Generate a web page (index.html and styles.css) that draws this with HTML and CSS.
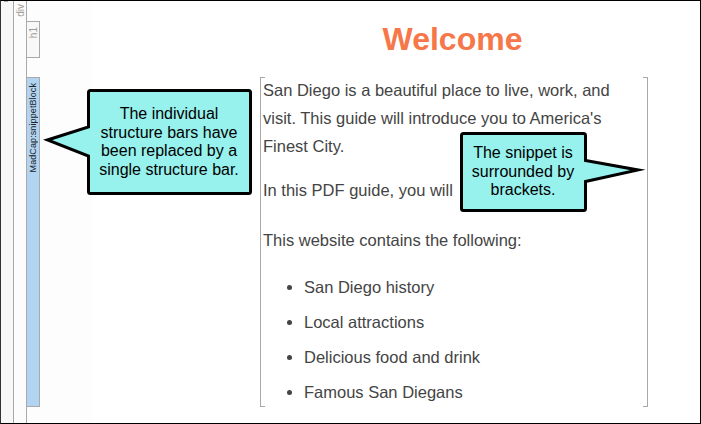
FILE: index.html
```html
<!DOCTYPE html>
<html lang="en">
<head>
    <meta charset="UTF-8">
    <title>Welcome</title>
    <link rel="stylesheet" href="styles.css">
</head>
<body>
    <div class="window">
        <!-- Structure bars -->
        <div class="bar-col bar-col-outer"></div>
        <div class="bar-col bar-col-div">
            <span class="bar-label">div</span>
        </div>
        <div class="tag-col">
            <div class="tag-h1"><span class="bar-label">h1</span></div>
            <div class="tag-snippet"><span class="snippet-label">MadCap:snippetBlock</span></div>
        </div>
        <div class="fade-col"></div>

        <!-- Document -->
        <div class="doc">
            <h1>Welcome</h1>
            <div class="snippet">
                <p>San Diego is a beautiful place to live, work, and visit. This guide will introduce you to America's Finest City.</p>
                <p class="guide-line">In this PDF guide, you will</p>
                <p>This website contains the following:</p>
                <ul>
                    <li>San Diego history</li>
                    <li>Local attractions</li>
                    <li>Delicious food and drink</li>
                    <li>Famous San Diegans</li>
                </ul>
            </div>
        </div>

        <!-- Callouts -->
        <div class="callout callout-left">
            <svg class="callout-shape" width="214" height="110" viewBox="0 0 214 110">
                <path d="M49.5 3.5 H207.5 Q209.5 3.5 209.5 5.5 V104.5 Q209.5 106.5 207.5 106.5 H49.5 Q47.5 106.5 47.5 104.5 V69 L6.5 53 L47.5 40 V5.5 Q47.5 3.5 49.5 3.5 Z"></path>
            </svg>
            <p class="callout-text">The individual<br>structure bars have<br>been replaced by a<br>single structure bar.</p>
        </div>
        <div class="callout callout-right">
            <svg class="callout-shape" width="192" height="84" viewBox="0 0 192 84">
                <path d="M5.5 2.5 H125.5 Q127.5 2.5 127.5 4.5 V29.5 L180 39 L127.5 50.5 V77.5 Q127.5 79.5 125.5 79.5 H5.5 Q3.5 79.5 3.5 77.5 V4.5 Q3.5 2.5 5.5 2.5 Z"></path>
            </svg>
            <p class="callout-text">The snippet is<br>surrounded by<br>brackets.</p>
        </div>
    </div>
</body>
</html>
```

FILE: styles.css
```css
html, body {
    margin: 0;
    padding: 0;
}

body {
    width: 701px;
    height: 424px;
    overflow: hidden;
    font-family: 'Liberation Sans', Arial, sans-serif;
    background-color: #fff;
}

.window {
    position: relative;
    display: flex;
    box-sizing: border-box;
    width: 701px;
    height: 424px;
    border: 1px solid #000;
    border-left-color: #333;
    overflow: hidden;
}

/* Structure bars */
.bar-col {
    flex: none;
    box-sizing: border-box;
    width: 13px;
    border-right: 1px solid #a9a9a9;
}

.bar-col-outer {
    background:
        linear-gradient(#aaa, #aaa) 3px 0 / 4px 1px no-repeat,
        #f8f8f8;
}

.bar-col-div {
    background-color: #fcfcfc;
    display: flex;
    justify-content: center;
    align-items: flex-start;
    padding-top: 3px;
}

.tag-col {
    flex: none;
    width: 13px;
    background-color: #fdfdfd;
    display: flex;
    flex-direction: column;
}

.bar-label {
    writing-mode: vertical-rl;
    transform: rotate(180deg);
    font-size: 10px;
    line-height: 11px;
    color: #a09a94;
}

.tag-h1 {
    flex: none;
    box-sizing: border-box;
    width: 14px;
    height: 37px;
    margin: 20px 0 0 -1px;
    padding-top: 5px;
    border: 1px solid #a9a9a9;
    background-color: #f8f8f8;
    display: flex;
    justify-content: center;
    align-items: flex-start;
}

.tag-snippet {
    flex: none;
    box-sizing: border-box;
    width: 14px;
    height: 330px;
    margin: 19px 0 0 -1px;
    border: 1px solid #a9a9a9;
    background-color: #b0d4f2;
    display: flex;
    justify-content: center;
    align-items: flex-start;
    padding-top: 5px;
}

.snippet-label {
    writing-mode: vertical-rl;
    transform: rotate(180deg);
    font-size: 9px;
    line-height: 11px;
    white-space: nowrap;
    color: #222;
    letter-spacing: 0.1px;
}

.fade-col {
    flex: none;
    width: 52px;
    background-color: #fdfdfd;
}

/* Document */
.doc {
    flex: none;
    width: 388px;
    margin-left: 168px;
    color: #444;
}

.doc h1 {
    margin: 20px 0 14px;
    padding-right: 3px;
    height: 42px;
    font-size: 32px;
    line-height: 36px;
    font-weight: bold;
    text-align: center;
    color: #f6774a;
}

.snippet {
    display: flow-root;
    box-sizing: border-box;
    width: 388px;
    height: 330px;
    padding: 0 20px 0 2px;
    font-size: 16.5px;
    line-height: 28px;
    border-left: 1px solid #a9a9a9;
    border-right: 1px solid #a9a9a9;
    background:
        linear-gradient(#a9a9a9, #a9a9a9) left top / 4px 1px no-repeat,
        linear-gradient(#a9a9a9, #a9a9a9) right top / 4px 1px no-repeat,
        linear-gradient(#a9a9a9, #a9a9a9) left bottom / 4px 1px no-repeat,
        linear-gradient(#a9a9a9, #a9a9a9) right bottom / 4px 1px no-repeat;
}

.snippet p {
    margin: 0 0 16px;
}

.snippet p:first-child {
    margin-top: -1px;
}

.snippet .guide-line {
    margin-bottom: 22px;
}

.snippet ul {
    margin: 0;
    padding: 3px 0 0 41px;
}

.snippet li {
    margin-bottom: 7px;
}

/* Callouts */
.callout {
    position: absolute;
}

.callout-left {
    left: 40px;
    top: 86px;
    width: 214px;
    height: 110px;
}

.callout-right {
    left: 457px;
    top: 130px;
    width: 192px;
    height: 84px;
}

.callout-shape {
    position: absolute;
    left: 0;
    top: 0;
}

.callout-shape path {
    fill: #97f1ed;
    stroke: #000;
    stroke-width: 3;
    stroke-linejoin: miter;
    stroke-miterlimit: 10;
}

.callout-text {
    position: relative;
    margin: 0;
    font-size: 16px;
    line-height: 18.5px;
    text-align: center;
    color: #000;
}

.callout-left .callout-text {
    margin-left: 46px;
    width: 164px;
    padding-top: 18px;
}

.callout-right .callout-text {
    width: 130px;
    padding-top: 13px;
}
```
